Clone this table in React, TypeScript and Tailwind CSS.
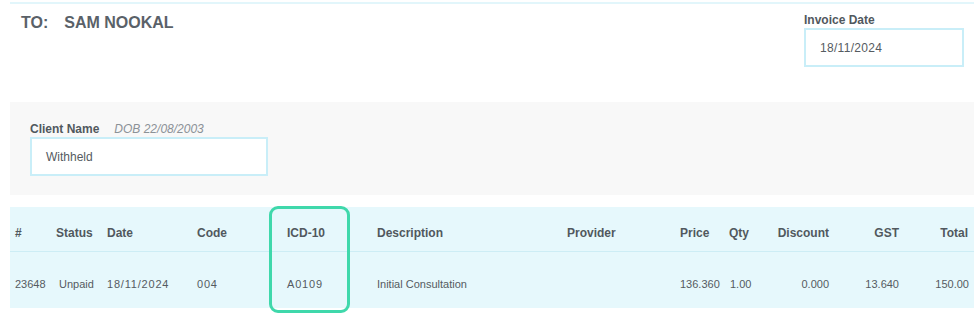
import React from "react";

const cols = "grid grid-cols-[40px_50px_90px_90px_90px_190px_110px_52px_48px_65px_70px_69px]";

export default function App() {
  return (
    <div className="w-[980px] h-[316px] bg-white overflow-hidden font-['Liberation_Sans',Arial,sans-serif] text-[#555b61]">
      <div className="pt-[2px] pl-[10px]">
        <div className="w-[964px] h-[2px] bg-[#e2f6fb]" />
      </div>

      <div className="flex justify-between h-[98px]">
        <div className="pl-[21px] pt-[9px] flex items-baseline font-bold text-[#5a6168] text-[16px] leading-[20px]">
          <span>TO:</span>
          <span className="ml-[16px]">SAM NOOKAL</span>
        </div>
        <div className="pr-[16px] pt-[8px] flex flex-col">
          <div className="text-[12px] leading-[16px] font-bold text-[#51585e]">Invoice Date</div>
          <div className="w-[160px] h-[39px] border-2 border-[#c9eef8] bg-white flex items-center pl-[14px] text-[12px] tracking-[0.3px] text-[#555b61]">
            18/11/2024
          </div>
        </div>
      </div>

      <div className="ml-[10px] w-[964px] h-[93px] bg-[#f8f8f8] pl-[20px] pt-[20px]">
        <div className="flex items-baseline text-[12px] leading-[15px]">
          <span className="font-bold text-[#51585e]">Client Name</span>
          <span className="ml-[15px] italic text-[#8b9197]">DOB 22/08/2003</span>
        </div>
        <div className="w-[238px] h-[39px] border-2 border-[#c9eef8] bg-white flex items-center pl-[14px] text-[12px] text-[#555b61]">
          Withheld
        </div>
      </div>

      <div className="relative mt-[12px] ml-[10px] w-[964px] bg-[#e6f8fc]">
        <div className={`${cols} h-[45px] border-b border-[#cdedf5] pt-[18px] text-[12px] leading-[16px] font-bold text-[#51585e]`}>
          <div className="pl-[5px]">#</div>
          <div className="pl-[6px]">Status</div>
          <div className="pl-[7px]">Date</div>
          <div className="pl-[7px]">Code</div>
          <div className="pl-[7px]">ICD-10</div>
          <div className="pl-[7px]">Description</div>
          <div className="pl-[7px]">Provider</div>
          <div className="pl-[10px]">Price</div>
          <div className="pl-[7px]">Qty</div>
          <div className="pr-[6px] text-right">Discount</div>
          <div className="pr-[6px] text-right">GST</div>
          <div className="pr-[6px] text-right">Total</div>
        </div>
        <div className={`${cols} h-[56px] pt-[25px] text-[11px] leading-[14px] text-[#555b61]`}>
          <div className="pl-[5px]">23648</div>
          <div className="pl-[9px]">Unpaid</div>
          <div className="pl-[7px] tracking-[0.8px]">18/11/2024</div>
          <div className="pl-[7px] tracking-[0.8px]">004</div>
          <div className="pl-[7px] tracking-[0.8px]">A0109</div>
          <div className="pl-[7px]">Initial Consultation</div>
          <div className="pl-[7px]"></div>
          <div className="pl-[10px]">136.360</div>
          <div className="pl-[8px]">1.00</div>
          <div className="pr-[6px] text-right">0.000</div>
          <div className="pr-[6px] text-right">13.640</div>
          <div className="pr-[5px] text-right">150.00</div>
        </div>
        <div className="absolute left-[259px] top-[-1px] w-[81px] h-[107px] border-[3px] border-[#3fd8ab] rounded-[9px]" />
      </div>
    </div>
  );
}
